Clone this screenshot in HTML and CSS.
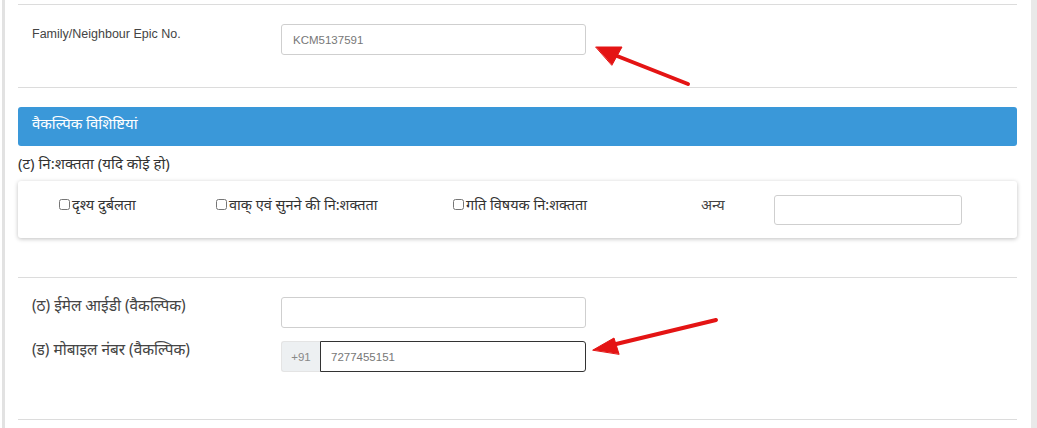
FILE: index.html
```html
<!DOCTYPE html>
<html lang="hi">
<head>
    <meta charset="UTF-8">
    <meta name="viewport" content="width=device-width, initial-scale=1.0">
    <title>वैकल्पिक विशिष्टियां</title>
    <link rel="stylesheet" href="styles.css">
</head>
<body>
    <div class="panel">
        <hr class="rule">

        <div class="form-row epic-row">
            <label class="row-label" for="epic">Family/Neighbour Epic No.</label>
            <input id="epic" class="field" type="text" value="KCM5137591">
        </div>

        <hr class="rule">

        <div class="section-head">वैकल्पिक विशिष्टियां</div>
        <div class="sub-head">(ट) नि:शक्तता (यदि कोई हो)</div>

        <div class="card">
            <label class="check"><input type="checkbox">दृश्य दुर्बलता</label>
            <label class="check"><input type="checkbox">वाक् एवं सुनने की नि:शक्तता</label>
            <label class="check"><input type="checkbox">गति विषयक नि:शक्तता</label>
            <span class="other-label">अन्य</span>
            <input class="field other-field" type="text">
        </div>

        <hr class="rule rule-low">

        <div class="form-row contact-row">
            <label class="row-label" for="email">(ठ) ईमेल आईडी (वैकल्पिक)</label>
            <input id="email" class="field" type="text">
        </div>
        <div class="form-row contact-row">
            <label class="row-label" for="mobile">(ड) मोबाइल नंबर (वैकल्पिक)</label>
            <div class="input-group">
                <span class="addon">+91</span>
                <input id="mobile" class="field phone" type="text" value="7277455151">
            </div>
        </div>

        <hr class="rule rule-end">
    </div>

    <!-- annotation arrows -->
    <svg class="arrows" width="1037" height="428" viewBox="0 0 1037 428">
        <g stroke="#e41414" stroke-width="4" stroke-linecap="round" fill="#e41414">
            <line x1="688" y1="84" x2="612" y2="54"/>
            <polygon points="596,47 622,47 612,65" stroke-width="1"/>
            <line x1="716" y1="320" x2="612" y2="345"/>
            <polygon points="593,350 614,338 619,354" stroke-width="1"/>
        </g>
    </svg>
</body>
</html>
```

FILE: styles.css
```css
body {
    margin: 0;
    background: #fff;
    font-family: "Noto Sans", "Liberation Sans", Arial, sans-serif;
    color: #333;
    position: relative;
    height: 428px;
    overflow: hidden;
}
.panel {
    margin-left: 2px;
    width: 1035px;
    height: 428px;
    box-sizing: border-box;
    border-left: 3px solid #e2e2e2;
    border-right: 6px solid #e9e9e9;
    padding: 4px 14px 0 13px;
}
.rule {
    border: 0;
    border-top: 1px solid #dcdcdc;
    margin: 0;
}
.form-row {
    display: grid;
    grid-template-columns: 263px 305px;
    align-items: start;
}
.row-label {
    padding-left: 14px;
    font-size: 15px;
    color: #444;
}
.epic-row {
    padding: 19px 0 32px;
}
.epic-row .row-label {
    padding-top: 3px;
    font-size: 12.5px;
    font-family: "Liberation Sans", Arial, sans-serif;
}
.field {
    box-sizing: border-box;
    height: 31px;
    width: 305px;
    border: 1px solid #cfcfcf;
    border-radius: 3px;
    padding: 0 11px;
    font-family: "Liberation Sans", Arial, sans-serif;
    font-size: 11.5px;
    color: #777;
    background: #fff;
    outline: none;
}
.section-head {
    margin-top: 19px;
    height: 39px;
    box-sizing: border-box;
    background: #3a98d9;
    border-radius: 3px;
    color: #fff;
    font-size: 15px;
    padding: 6px 14px 0;
}
.sub-head {
    font-size: 15px;
    padding: 7px 0 0;
    height: 35px;
    box-sizing: border-box;
}
.card {
    height: 57px;
    box-sizing: border-box;
    background: #fff;
    border-radius: 3px;
    box-shadow: 0 1px 4px rgba(0, 0, 0, 0.25);
    display: grid;
    grid-template-columns: 157px 237px 248px 73px 188px;
    align-items: start;
    padding: 13px 0 0 41px;
}
.check {
    font-size: 14.5px;
    display: flex;
    align-items: center;
    padding-top: 0;
}
.check input {
    width: 11px;
    height: 11px;
    margin: 0 2px 0 0;
}
.other-label {
    font-size: 14.5px;
    color: #444;
}
.other-field {
    width: 188px;
    height: 30px;
    margin-top: 1px;
}
.rule-low {
    margin-top: 39px;
}
.contact-row {
    padding-top: 19px;
}
.contact-row + .contact-row {
    padding-top: 13px;
}
.contact-row .row-label {
    font-size: 15.4px;
    margin-top: -2px;
}
.input-group {
    display: flex;
    width: 305px;
    height: 31px;
}
.addon {
    box-sizing: border-box;
    width: 39px;
    background: #edf0f2;
    border: 1px solid #e4e4e4;
    border-right: 0;
    border-radius: 3px 0 0 3px;
    font-family: "Liberation Sans", Arial, sans-serif;
    font-size: 11.5px;
    color: #888;
    display: flex;
    align-items: center;
    justify-content: center;
}
.phone {
    flex: 1;
    width: auto;
    border: 1px solid #333;
    border-radius: 0 3px 3px 0;
    padding-left: 10px;
}
.rule-end {
    margin-top: 47px;
}
.arrows {
    position: absolute;
    left: 0;
    top: 0;
    pointer-events: none;
}
```
